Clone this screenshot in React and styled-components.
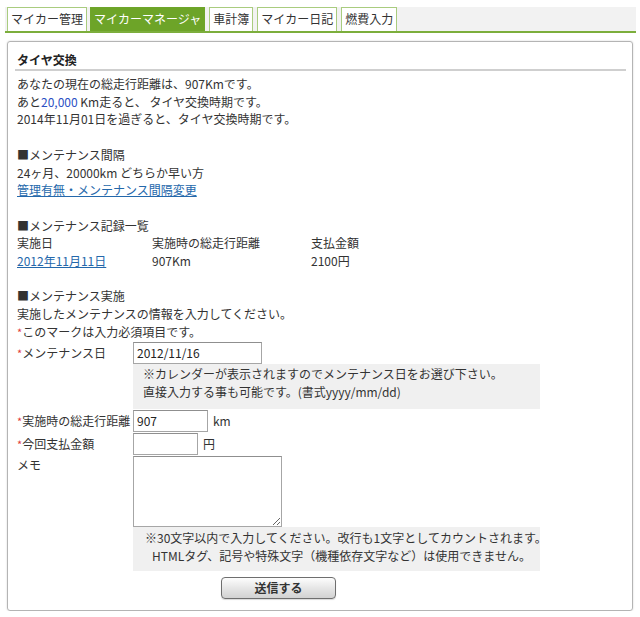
import React from "react";
import styled, { createGlobalStyle } from "styled-components";

const Global = createGlobalStyle`
  html, body { margin: 0; padding: 0; background: #fff; }
  body {
    font-family: "Noto Sans CJK JP", "Noto Sans", sans-serif;
    font-size: 12px;
    color: #333;
  }
`;

const LH = "17.7px";

const Page = styled.div`
  padding-top: 7px;
`;

const TabBar = styled.div`
  display: flex;
  gap: 4px;
  margin: 0 4px 0 5px;
  padding-left: 2px;
  background: #f2f2f2;
  border-bottom: 2px solid #7cae3c;
`;

const Tab = styled.div`
  height: 24px;
  box-sizing: border-box;
  padding: 0 3px;
  line-height: 22px;
  border: 1px solid ${(p) => (p.$active ? "#6ea52a" : "#a9cc7f")};
  border-bottom: none;
  background: ${(p) => (p.$active ? "#6da428" : "#fff")};
  color: ${(p) => (p.$active ? "#fff" : "#333")};
  white-space: nowrap;
  &:first-child { margin-right: -1px; }
`;

const Box = styled.div`
  margin: 8px 7px 0 7px;
  border: 1px solid #b4b4b4;
  border-radius: 3px;
  box-shadow: 0 0 2px rgba(0, 0, 0, 0.18);
  padding: 9px 6px 11px 9px;
  line-height: ${LH};
`;

const Title = styled.div`
  font-weight: bold;
  margin: 0 0 4.3px -2px;
  padding-left: 2px;
  border-bottom: 2px solid #cfcfcf;
  color: #222;
`;

const Section = styled.div`
  margin-top: ${(p) => (p.$first ? "0" : LH)};
`;

const Line = styled.div`
  white-space: nowrap;
`;

const Num = styled.span`
  color: #2b4fc4;
`;

const Link = styled.a`
  color: #2468ab;
  text-decoration: underline;
  cursor: pointer;
`;

const Table = styled.div`
  display: grid;
  grid-template-columns: 135px 159px auto;
`;

const Req = styled.span`
  color: #e23b3b;
  font-size: 11px;
`;

const Form = styled.div`
  display: grid;
  grid-template-columns: 116px 1fr;
  row-gap: 1px;
`;

const Label = styled.div`
  line-height: ${(p) => (p.$tall ? "22px" : LH)};
  white-space: nowrap;
`;

const Field = styled.div`
  display: flex;
  flex-direction: column;
  align-items: flex-start;
`;

const InputRow = styled.div`
  display: flex;
  align-items: center;
  gap: 5px;
`;

const Input = styled.input`
  box-sizing: border-box;
  width: ${(p) => p.$w}px;
  height: 22px;
  border: 1px solid #a6a6a6;
  border-top-color: #8f8f8f;
  padding: 0 3px;
  margin: 0;
  font-family: "Noto Sans CJK JP", sans-serif;
  font-size: 12px;
  color: #222;
  background: #fff;
  outline: none;
`;

const Memo = styled.textarea`
  box-sizing: border-box;
  width: 149px;
  height: 71px;
  border: 1px solid #a6a6a6;
  border-top-color: #8f8f8f;
  margin: 0;
  padding: 2px;
  font-family: "Noto Sans CJK JP", sans-serif;
  font-size: 12px;
  display: block;
`;

const Note = styled.div`
  box-sizing: border-box;
  width: 407px;
  background: #f0f0f0;
  padding: ${(p) => p.$pad};
  line-height: 18px;
  white-space: nowrap;
`;

const Indent = styled.div`
  padding-left: ${(p) => p.$px || 0}px;
`;

const Button = styled.button`
  margin: 6px 0 0 88px;
  width: 115px;
  height: 22px;
  box-sizing: border-box;
  border: 1px solid #6e6e6e;
  border-radius: 4px;
  background: linear-gradient(#fdfdfd, #e6e6e6 50%, #d2d2d2);
  box-shadow: 0 1px 1px rgba(0, 0, 0, 0.15);
  font-family: "Noto Sans CJK JP", sans-serif;
  font-size: 12px;
  font-weight: bold;
  color: #333;
  padding: 0;
  cursor: pointer;
`;

const tabs = ["マイカー管理", "マイカーマネージャ", "車計簿", "マイカー日記", "燃費入力"];

export default function App() {
  return (
    <Page>
      <Global />
      <TabBar>
        {tabs.map((t, i) => (
          <Tab key={t} $active={i === 1}>
            {t}
          </Tab>
        ))}
      </TabBar>
      <Box>
        <Title>タイヤ交換</Title>
        <Section $first>
          <Line>あなたの現在の総走行距離は、907Kmです。</Line>
          <Line>
            あと<Num>20,000</Num> Km走ると、 タイヤ交換時期です。
          </Line>
          <Line>2014年11月01日を過ぎると、タイヤ交換時期です。</Line>
        </Section>
        <Section>
          <Line>■メンテナンス間隔</Line>
          <Line>24ヶ月、20000km どちらか早い方</Line>
          <Line>
            <Link>管理有無・メンテナンス間隔変更</Link>
          </Line>
        </Section>
        <Section>
          <Line>■メンテナンス記録一覧</Line>
          <Table>
            <div>実施日</div>
            <div>実施時の総走行距離</div>
            <div>支払金額</div>
            <div>
              <Link>2012年11月11日</Link>
            </div>
            <div>907Km</div>
            <div>2100円</div>
          </Table>
        </Section>
        <Section>
          <Line>■メンテナンス実施</Line>
          <Line>実施したメンテナンスの情報を入力してください。</Line>
          <Line>
            <Req>*</Req>このマークは入力必須項目です。
          </Line>
          <Form>
            <Label $tall>
              <Req>*</Req>メンテナンス日
            </Label>
            <Field>
              <Input $w={129} defaultValue="2012/11/16" />
              <Note $pad="1px 10px 8px">
                <div>※カレンダーが表示されますのでメンテナンス日をお選び下さい。</div>
                <div>直接入力する事も可能です。(書式yyyy/mm/dd)</div>
              </Note>
            </Field>
            <Label $tall>
              <Req>*</Req>実施時の総走行距離
            </Label>
            <Field>
              <InputRow>
                <Input $w={75} defaultValue="907" />
                <span>km</span>
              </InputRow>
            </Field>
            <Label $tall>
              <Req>*</Req>今回支払金額
            </Label>
            <Field>
              <InputRow>
                <Input $w={65} defaultValue="" />
                <span>円</span>
              </InputRow>
            </Field>
            <Label>メモ</Label>
            <Field>
              <Memo />
              <Note $pad="2px 10px 6px 12px">
                <div>※30文字以内で入力してください。改行も1文字としてカウントされます。</div>
                <Indent $px={7}>HTMLタグ、記号や特殊文字（機種依存文字など）は使用できません。</Indent>
              </Note>
              <Button type="button">送信する</Button>
            </Field>
          </Form>
        </Section>
      </Box>
    </Page>
  );
}
